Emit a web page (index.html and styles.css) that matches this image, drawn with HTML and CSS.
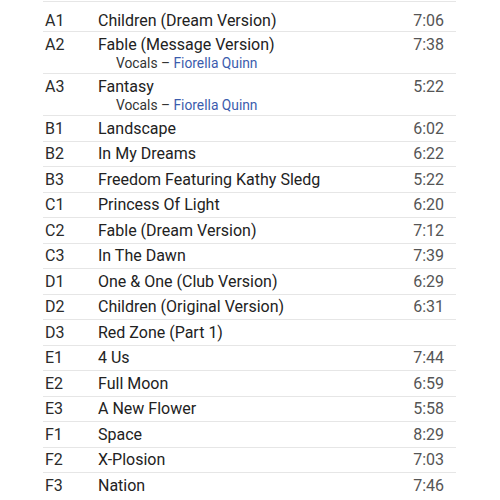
FILE: index.html
```html
<!DOCTYPE html>
<html>
<head>
<meta charset="utf-8">
<link rel="stylesheet" href="styles.css">
</head>
<body>
<div class="tracklist">
  <table class="tracks">
    <tbody>
      <tr class="first"><td class="pos">A1</td><td class="title">Children (Dream Version)</td><td class="dur">7:06</td></tr>
      <tr><td class="pos">A2</td><td class="title">Fable (Message Version)<div class="credit">Vocals – <a href="#">Fiorella Quinn</a></div></td><td class="dur">7:38</td></tr>
      <tr><td class="pos">A3</td><td class="title">Fantasy<div class="credit">Vocals – <a href="#">Fiorella Quinn</a></div></td><td class="dur">5:22</td></tr>
      <tr><td class="pos">B1</td><td class="title">Landscape</td><td class="dur">6:02</td></tr>
      <tr><td class="pos">B2</td><td class="title">In My Dreams</td><td class="dur">6:22</td></tr>
      <tr><td class="pos">B3</td><td class="title">Freedom Featuring Kathy Sledg</td><td class="dur">5:22</td></tr>
      <tr><td class="pos">C1</td><td class="title">Princess Of Light</td><td class="dur">6:20</td></tr>
      <tr><td class="pos">C2</td><td class="title">Fable (Dream Version)</td><td class="dur">7:12</td></tr>
      <tr><td class="pos">C3</td><td class="title">In The Dawn</td><td class="dur">7:39</td></tr>
      <tr><td class="pos">D1</td><td class="title">One &amp; One (Club Version)</td><td class="dur">6:29</td></tr>
      <tr><td class="pos">D2</td><td class="title">Children (Original Version)</td><td class="dur">6:31</td></tr>
      <tr><td class="pos">D3</td><td class="title">Red Zone (Part 1)</td><td class="dur"></td></tr>
      <tr><td class="pos">E1</td><td class="title">4 Us</td><td class="dur">7:44</td></tr>
      <tr><td class="pos">E2</td><td class="title">Full Moon</td><td class="dur">6:59</td></tr>
      <tr><td class="pos">E3</td><td class="title">A New Flower</td><td class="dur">5:58</td></tr>
      <tr><td class="pos">F1</td><td class="title">Space</td><td class="dur">8:29</td></tr>
      <tr><td class="pos">F2</td><td class="title">X-Plosion</td><td class="dur">7:03</td></tr>
      <tr><td class="pos">F3</td><td class="title">Nation</td><td class="dur">7:46</td></tr>
    </tbody>
  </table>
</div>
</body>
</html>
```
FILE: styles.css
```css
html, body {
  margin: 0;
  padding: 0;
  background: #ffffff;
}
body {
  font-family: Roboto, "Liberation Sans", sans-serif;
  color: #222222;
}
.tracklist {
  margin: 1px 0 0 43px;
  width: 413px;
}
.tracks {
  width: 100%;
  border-collapse: collapse;
  font-size: 16px;
  line-height: 18px;
}
.tracks td {
  border-top: 1px solid #e6e6e6;
  padding: 3.5px 0 3px 0;
  vertical-align: top;
}
.tracks tr.first td {
  padding-top: 10px;
  padding-bottom: 1px;
}
.pos {
  width: 53px;
  padding-left: 2px !important;
  color: #2b2b2b;
}
.title {
  color: #222222;
}
.dur {
  text-align: right;
  padding-right: 12px !important;
  color: #555555;
}
.credit {
  font-size: 13.8px;
  line-height: 14px;
  padding-top: 2.5px;
  padding-left: 18px;
  color: #333333;
}
.credit a {
  color: #3b5cad;
  text-decoration: none;
}
```
